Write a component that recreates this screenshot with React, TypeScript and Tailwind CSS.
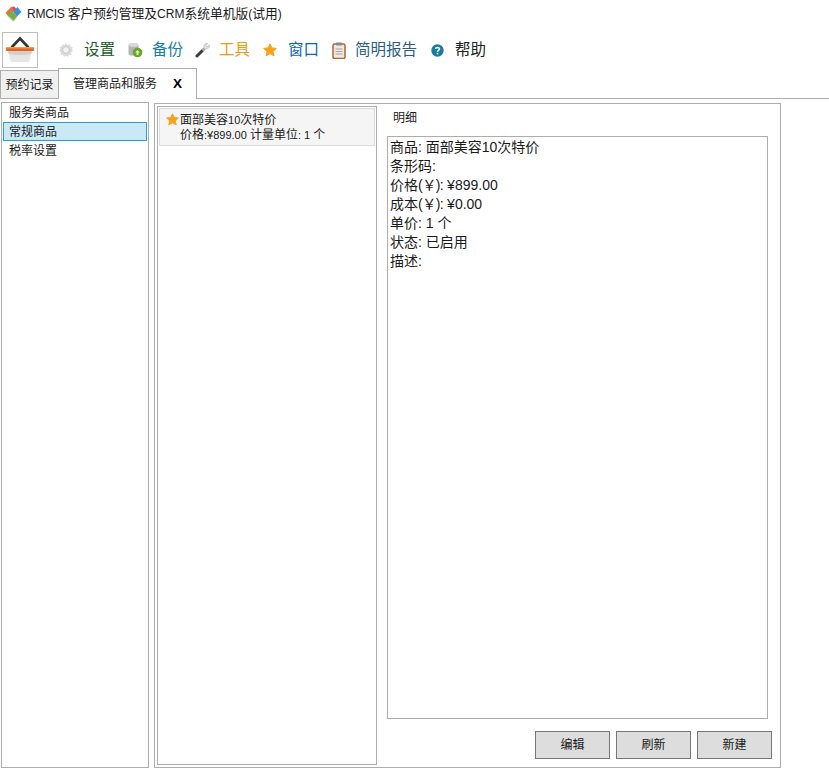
import React from 'react';

const FONT = '"Liberation Sans", "Noto Sans CJK SC", sans-serif';

const AppLogo = () => (
  <svg width="17" height="16" viewBox="0 0 17 16">
    <path d="M0.5 7 L6 1 L9.5 4.5 L4 11 Z" fill="#e9703a" />
    <path d="M6 1 L9 0.5 L11.5 3 L9.5 5.5 Z" fill="#dd4a56" />
    <path d="M10.5 3 L12.5 1 L16.5 6 L12 10.5 L8 6 Z" fill="#3f8fd6" />
    <path d="M2.5 9 L6 5 L12.5 10 L8.5 15 Z" fill="#76b13f" />
    <path d="M1.5 10 L8.5 15.5 L13 10.5 L8.5 14 Z" fill="#b7b7b7" />
  </svg>
);

const Basket = () => (
  <svg width="30" height="28" viewBox="0 0 30 28">
    <path d="M6.500 11.500 L15 2.500 L23.500 11.500" fill="none" stroke="#333333" strokeWidth="2.600" />
    <path d="M3 14 H27 L24.500 25 Q24.300 26 23 26 H7 Q5.700 26 5.500 25 Z" fill="#e6e6e4" />
    <path d="M3 14 H27 L26.500 18 Q15 20 3.500 18 Z" fill="#cfcfcd" />
    <rect x="1" y="11" width="28" height="4" rx="1" fill="#e5622a" />
    <rect x="1" y="11" width="28" height="1.500" rx="0.700" fill="#f2a044" />
  </svg>
);

const Gear = () => (
  <svg width="16" height="16" viewBox="0 0 16 16">
    <path d="M8 1 L9.500 3 L12 2.200 L12.500 4.500 L14.800 5.200 L13.800 7.500 L15 8.800 L13.200 10.200 L13.500 12.800 L11 12.900 L9.500 15 L8 13.800 L6 15 L4.800 13 L2.400 12.800 L2.800 10.200 L1 8.600 L2.400 7 L1.400 4.900 L3.600 4.400 L4.200 2.200 L6.500 3 Z" fill="#dcdcdc" />
    <circle cx="8" cy="8" r="3.400" fill="#f2f2f2" stroke="#c4c4c4" />
  </svg>
);

const Backup = () => (
  <svg width="16" height="16" viewBox="0 0 16 16">
    <rect x="1.500" y="1.500" width="10" height="12" rx="2" fill="#b5b5b5" />
    <ellipse cx="6.500" cy="3" rx="5" ry="1.800" fill="#d8d8d8" />
    <circle cx="10.500" cy="10.500" r="4.800" fill="#6aa52c" />
    <path d="M8 10.500 L10.500 8 L13 10.500 H11.500 V13 H9.500 V10.500 Z" fill="#d9efb0" />
  </svg>
);

const Wrench = () => (
  <svg width="16" height="16" viewBox="0 0 16 16">
    <path d="M2 14 L7.500 8.500" stroke="#3c3c3c" strokeWidth="3" strokeLinecap="round" />
    <path d="M7.500 8.500 L9.500 6.500" stroke="#a8a8a8" strokeWidth="3" />
    <path d="M14.500 2.800 L12 5 L10.800 4 L12.600 1.300 C10 0.800 8 3 9 6 L10 7 C13 7.600 15.300 5.400 14.500 2.800 Z" fill="#dedede" stroke="#b0b0b0" strokeWidth="0.500" />
  </svg>
);

const Star = ({ size = 14 }: { size?: number }) => (
  <svg width={size} height={size} viewBox="0 0 14 14">
    <path d="M7 0.800 L8.900 4.900 L13.400 5.400 L10 8.400 L11 12.900 L7 10.600 L3 12.900 L4 8.400 L0.600 5.400 L5.100 4.900 Z" fill="#f7a21b" stroke="#f7a21b" strokeLinejoin="round" />
  </svg>
);

const Clipboard = () => (
  <svg width="14" height="17" viewBox="0 0 14 17">
    <rect x="1" y="2" width="12" height="14.500" rx="1.500" fill="#eeeae2" stroke="#a9693a" strokeWidth="1.500" />
    <rect x="4" y="0.500" width="6" height="3" rx="0.800" fill="#8a8a80" />
    <path d="M3.500 7 H10.500 M3.500 9.500 H10.500 M3.500 12 H10.500" stroke="#a5a5a5" />
  </svg>
);

const Help = () => (
  <svg width="13" height="13" viewBox="0 0 13 13">
    <circle cx="6.500" cy="6.500" r="6.200" fill="#167d9e" />
    <path d="M4.500 5 C4.600 3.200 8.500 3 8.500 5 C8.500 6.400 6.500 6.200 6.500 7.800" fill="none" stroke="#fff" strokeWidth="1.500" />
    <rect x="5.700" y="8.800" width="1.600" height="1.600" fill="#fff" />
  </svg>
);

const toolbarItems = [
  { label: '设置', icon: <Gear />, color: 'text-[#1c5a2a]', iconBox: 'ml-[20px] w-[16px]', gap: 'ml-[10px]' },
  { label: '备份', icon: <Backup />, color: 'text-[#167ca8]', iconBox: 'ml-[12px] w-[16px]', gap: 'ml-[9px]' },
  { label: '工具', icon: <Wrench />, color: 'text-[#f29a0e]', iconBox: 'ml-[12px] w-[16px]', gap: 'ml-[8px]' },
  { label: '窗口', icon: <Star />, color: 'text-[#0a5fd1]', iconBox: 'ml-[13px] w-[14px]', gap: 'ml-[11px]' },
  { label: '简明报告', icon: <Clipboard />, color: 'text-[#2b5d84]', iconBox: 'ml-[13px] w-[14px]', gap: 'ml-[9px]' },
  { label: '帮助', icon: <Help />, color: 'text-[#222222]', iconBox: 'ml-[14px] w-[13px]', gap: 'ml-[11px]' },
];

const categories = ['服务类商品', '常规商品', '税率设置'];

const actions = ['编辑', '刷新', '新建'];

// latin runs render narrower than the cjk around them in this app
const Small = ({ children }: { children: React.ReactNode }) => <span className="text-[11px]">{children}</span>;
const Yuan = () => <span className="tracking-[-0.5px]">(￥):</span>;

export default function App() {
  return (
    <div className="flex h-[769px] w-[829px] flex-col overflow-hidden bg-white text-[#1a1a1a]" style={{ fontFamily: FONT }}>
      {/* title bar */}
      <div className="flex h-[28px] shrink-0 items-center pl-[5px] text-[12.75px]">
        <AppLogo />
        <span className="ml-[5px] whitespace-nowrap">
          <span className="text-[12px] tracking-[-0.2px]">RMCIS </span>客户预约管理及<span className="text-[12px]">CRM</span>系统单机版<span className="text-[12px]">(</span>试用<span className="text-[12px]">)</span>
        </span>
      </div>

      {/* toolbar */}
      <div className="mt-[4px] flex h-[36px] shrink-0 items-center pl-[2px]">
        <div className="flex h-[36px] w-[36px] items-center justify-center border border-[#bdbdbd]">
          <Basket />
        </div>
        {toolbarItems.map((item) => (
          <React.Fragment key={item.label}>
            <span className={`flex justify-center ${item.iconBox}`}>{item.icon}</span>
            <span className={`whitespace-nowrap text-[15.5px] leading-[20px] ${item.gap} ${item.color}`}>{item.label}</span>
          </React.Fragment>
        ))}
      </div>

      {/* tabs */}
      <div className="flex h-[31px] shrink-0 items-end">
        <div className="flex h-[29px] w-[59px] items-center justify-center border border-[#adadad] bg-[#f0f0f0] text-[12px]">
          预约记录
        </div>
        <div className="-ml-[1px] flex h-[31px] w-[139px] items-center border border-b-0 border-[#adadad] bg-white pl-[14px] text-[12px]">
          <span>管理商品和服务</span>
          <span className="ml-[16px] text-[13.5px] font-bold text-black">X</span>
        </div>
        <div className="h-[1px] flex-1 bg-[#adadad]" />
      </div>

      {/* body */}
      <div className="flex min-h-0 flex-1 pb-[1px] pl-[1px] text-[12px]">
        <div className="mt-[3px] flex w-[148px] flex-col border border-[#adadad] px-[1px]">
          {categories.map((c, i) => (
            <div
              key={c}
              className={`flex h-[19px] items-center whitespace-nowrap ${i === 1 ? 'border border-[#26a0da] bg-[#cbe8f6] pl-[5px]' : 'pl-[6px]'}`}
            >
              {c}
            </div>
          ))}
        </div>

        <div className="ml-[5px] mt-[4px] flex w-[627px] border border-[#adadad] pl-[2px] pt-[2px]">
          <div className="h-[659px] w-[220px] shrink-0 border border-[#adadad] p-[1px]">
            <div className="flex h-[38px] border border-[#dcdcdc] bg-[#f5f5f5] pl-[6px] pt-[4px]">
              <span className="w-[14px] shrink-0"><Star size={13} /></span>
              <div className="leading-[15px]">
                <div className="whitespace-nowrap">面部美容<Small>10</Small>次特价</div>
                <div className="whitespace-nowrap">价格<Small>:¥899.00 </Small>计量单位<Small>: 1 </Small>个</div>
              </div>
            </div>
          </div>

          <div className="ml-[10px] flex w-[385px] flex-col">
            <div className="h-[30px] shrink-0 pl-[6px] pt-[6px] leading-[12px]">明细</div>
            <div className="h-[583px] w-[381px] shrink-0 border border-[#adadad] pl-[2px] pt-[1px] text-[14px] leading-[19px]">
              <div className="whitespace-nowrap">商品: 面部美容10次特价</div>
              <div className="whitespace-nowrap">条形码:</div>
              <div className="whitespace-nowrap">价格<Yuan /> ¥899.00</div>
              <div className="whitespace-nowrap">成本<Yuan /> ¥0.00</div>
              <div className="whitespace-nowrap">单价: 1 个</div>
              <div className="whitespace-nowrap">状态: 已启用</div>
              <div className="whitespace-nowrap">描述:</div>
            </div>
            <div className="mt-[12px] flex justify-end gap-[6px]">
              {actions.map((a) => (
                <button key={a} className="flex h-[28px] w-[75px] items-center justify-center border-[1.5px] border-[#777777] bg-[#dddddd] text-[12px]">
                  {a}
                </button>
              ))}
            </div>
          </div>
        </div>
      </div>
    </div>
  );
}
